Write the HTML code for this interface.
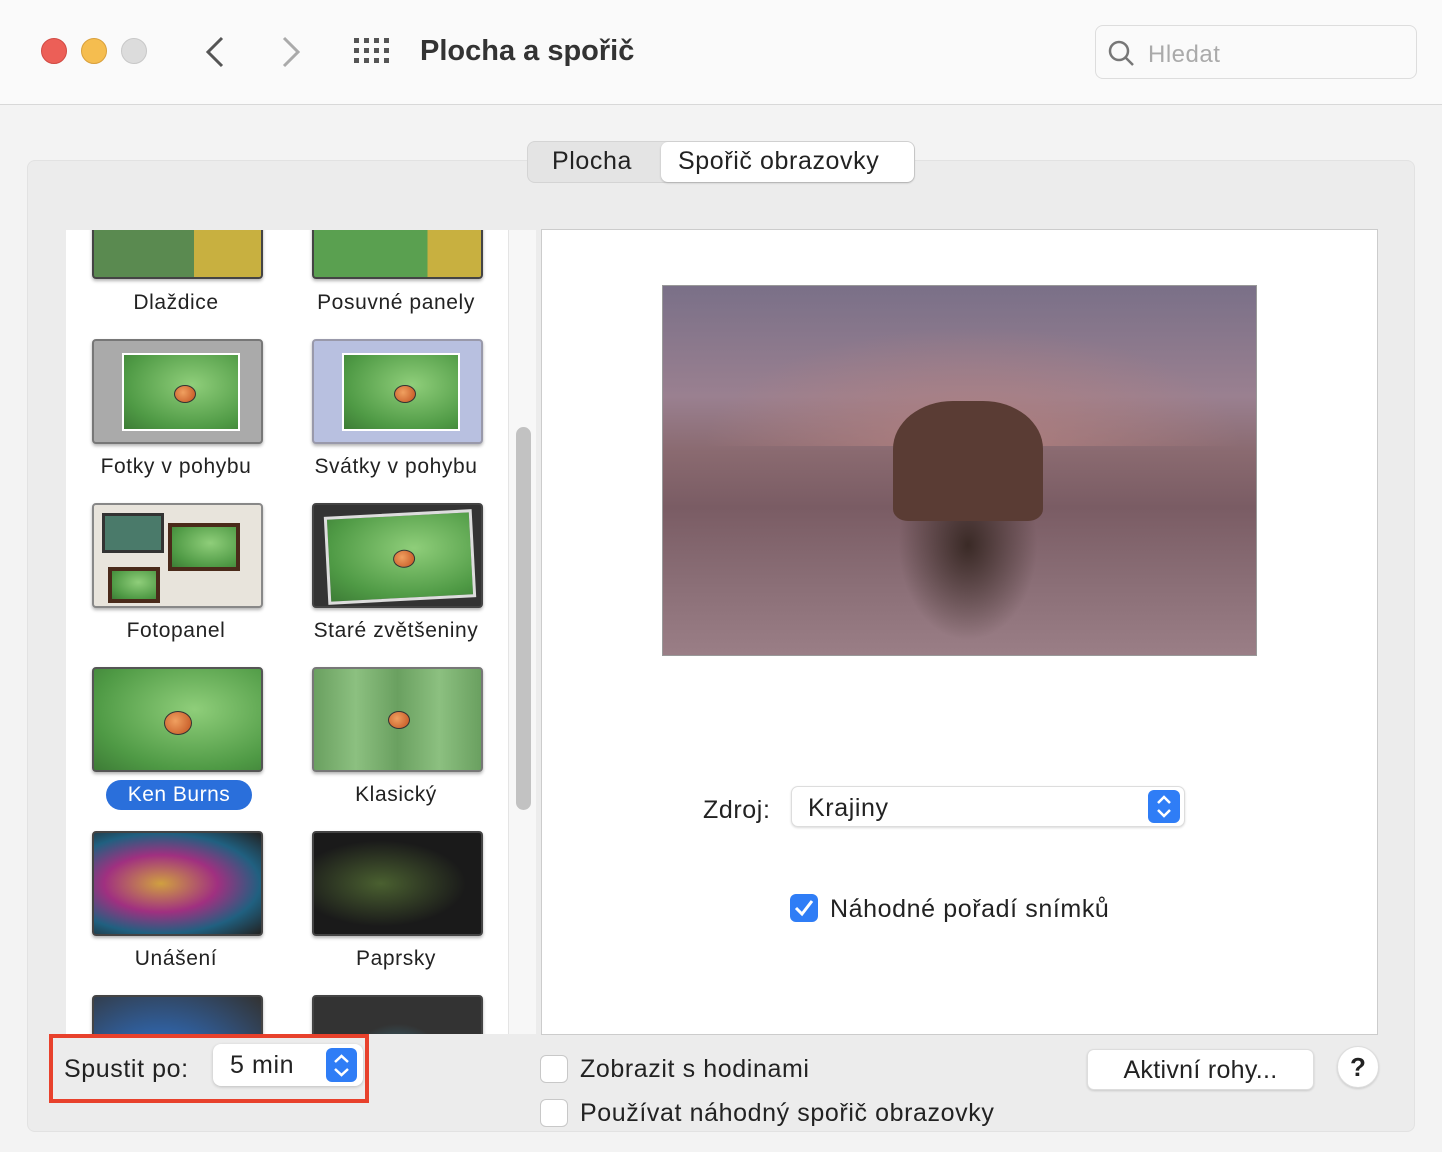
<!DOCTYPE html>
<html><head><meta charset="utf-8"><style>
*{margin:0;padding:0;box-sizing:border-box}
body{width:1442px;height:1152px;background:#f3f3f3;font-family:"Liberation Sans",sans-serif;color:#222;position:relative;overflow:hidden}
.abs{position:absolute}
.tb{left:0;top:0;width:1442px;height:105px;background:#fafafa;border-bottom:1px solid #d8d8d8}
.dot{width:26px;height:26px;border-radius:50%;top:38px}
.panel{left:27px;top:160px;width:1388px;height:972px;background:#ececec;border:1px solid #e2e2e2;border-radius:8px}
.list{left:66px;top:230px;width:442px;height:804px;background:#fff;overflow:hidden}
.th{position:absolute;width:171px;height:105px;border:2px solid #444;border-radius:4px;box-shadow:0 2px 3px rgba(0,0,0,.3)}
.lb{position:absolute;width:220px;text-align:center;font-size:21px;color:#222;letter-spacing:.6px}
.green{background:radial-gradient(ellipse at 60% 40%,#8fce7a,#4f9a45 70%,#3d7c36)}
.bug{position:absolute;width:22px;height:18px;border-radius:50%;background:radial-gradient(circle at 40% 40%,#f0a060,#c0501e);border:1px solid #333}
.cb{width:28px;height:28px;border:1px solid #c8c8c8;border-radius:6px;background:#fff}
.t25{font-size:25px;letter-spacing:.6px}
</style></head><body>
<div class="abs tb"></div>
<div class="abs dot" style="left:41px;background:#ec5f57;border:1px solid #d14a43"></div>
<div class="abs dot" style="left:81px;background:#f5bd4f;border:1px solid #d9a03b"></div>
<div class="abs dot" style="left:121px;background:#dcdcdc;border:1px solid #c8c8c8"></div>
<svg class="abs" style="left:200px;top:34px" width="110" height="36"><path d="M22 4 L8 18 L22 32" stroke="#555" stroke-width="3" fill="none"/><path d="M84 4 L98 18 L84 32" stroke="#aaa" stroke-width="3" fill="none"/></svg>
<svg class="abs" style="left:354px;top:38px" width="38" height="28" fill="#555"><g id="r"><rect x="0" y="0" width="5" height="5"/><rect x="10" y="0" width="5" height="5"/><rect x="20" y="0" width="5" height="5"/><rect x="30" y="0" width="5" height="5"/></g><use href="#r" y="10"/><use href="#r" y="20"/></svg>
<div class="abs" style="left:420px;top:35px;font-size:29px;font-weight:bold;color:#333">Plocha a spořič</div>
<div class="abs" style="left:1095px;top:25px;width:322px;height:54px;border:1px solid #ddd;border-radius:8px;background:#fafafa"></div>
<svg class="abs" style="left:1106px;top:38px" width="30" height="30"><circle cx="13" cy="13" r="9" stroke="#777" stroke-width="2.5" fill="none"/><path d="M20 20 L27 27" stroke="#777" stroke-width="2.5"/></svg>
<div class="abs" style="left:1148px;top:41px;font-size:24px;color:#aaa;letter-spacing:.5px">Hledat</div>
<div class="abs panel"></div>
<div class="abs" style="left:527px;top:141px;width:388px;height:42px;background:#e4e4e4;border:1px solid #d4d4d4;border-radius:8px"></div>
<div class="abs" style="left:661px;top:142px;width:253px;height:40px;background:#fff;border-radius:7px;box-shadow:0 1px 2px rgba(0,0,0,.2)"></div>
<div class="abs t25" style="left:552px;top:147px">Plocha</div>
<div class="abs t25" style="left:678px;top:147px">Spořič obrazovky</div>
<div class="abs list">
 <div class="th green" style="left:26px;top:-56px;background:linear-gradient(90deg,#5a8a50 60%,#c8b040 60%)"></div>
 <div class="th green" style="left:246px;top:-56px;background:linear-gradient(90deg,#5aa050 68%,#c8b040 68%)"></div>
 <div class="lb" style="left:0;top:61px">Dlaždice</div><div class="lb" style="left:220px;top:61px">Posuvné panely</div>
 <div class="th" style="left:26px;top:109px;background:#aaa;border-color:#777"><div class="abs green" style="left:28px;top:12px;width:118px;height:78px;border:2px solid #fff"><div class="bug" style="left:50px;top:30px"></div></div></div>
 <div class="th" style="left:246px;top:109px;background:#b8c0e0;border-color:#99a"><div class="abs green" style="left:28px;top:12px;width:118px;height:78px;border:2px solid #fff"><div class="bug" style="left:50px;top:30px"></div></div></div>
 <div class="lb" style="left:0;top:225px">Fotky v pohybu</div><div class="lb" style="left:220px;top:225px">Svátky v pohybu</div>
 <div class="th" style="left:26px;top:273px;background:#e8e4dc;border-color:#888"><div class="abs" style="left:8px;top:8px;width:62px;height:40px;background:#4a7a6a;border:3px solid #333"></div><div class="abs green" style="left:74px;top:18px;width:72px;height:48px;border:4px solid #4a2a1a"></div><div class="abs green" style="left:14px;top:62px;width:52px;height:36px;border:4px solid #4a2a1a"></div></div>
 <div class="th" style="left:246px;top:273px;background:#333"><div class="abs green" style="left:12px;top:8px;width:148px;height:88px;border:3px solid #ddd;transform:rotate(-3deg)"><div class="bug" style="left:64px;top:34px"></div></div></div>
 <div class="lb" style="left:0;top:389px">Fotopanel</div><div class="lb" style="left:220px;top:389px">Staré zvětšeniny</div>
 <div class="th green" style="left:26px;top:437px;border-color:#555"><div class="bug" style="left:70px;top:42px;width:28px;height:24px"></div></div>
 <div class="th" style="left:246px;top:437px;background:linear-gradient(90deg,#6aa060,#8cc080,#6aa060,#8cc080,#6aa060);border-color:#777"><div class="bug" style="left:74px;top:42px"></div></div>
 <div class="abs" style="left:40px;top:550px;width:146px;height:30px;background:#2a6fdb;border-radius:15px;color:#fff;font-size:21px;text-align:center;line-height:30px;letter-spacing:.5px">Ken Burns</div>
 <div class="lb" style="left:220px;top:553px">Klasický</div>
 <div class="th" style="left:26px;top:601px;background:radial-gradient(ellipse at 40% 50%,#d0a040,#a03080 40%,#206080 70%,#222)"></div>
 <div class="th" style="left:246px;top:601px;background:radial-gradient(ellipse at 40% 50%,#4a6030,#1a1a1a 60%)"></div>
 <div class="lb" style="left:0;top:717px">Unášení</div><div class="lb" style="left:220px;top:717px">Paprsky</div>
 <div class="th" style="left:26px;top:765px;background:radial-gradient(ellipse at 40% 80%,#60a060,#3060a0 40%,#333)"></div>
 <div class="th" style="left:246px;top:765px;background:radial-gradient(ellipse at 50% 90%,#40a0c0,#333 50%)"></div>
</div>
<div class="abs" style="left:508px;top:230px;width:28px;height:804px;background:#f7f7f7;border-left:1px solid #e4e4e4"></div>
<div class="abs" style="left:516px;top:427px;width:15px;height:383px;background:#c2c2c2;border-radius:8px"></div>
<div class="abs" style="left:541px;top:229px;width:837px;height:806px;background:#fff;border:1px solid #ccc"></div>
<div class="abs" style="left:662px;top:285px;width:595px;height:371px;border:1px solid #999;background:linear-gradient(180deg,#7a7088 0%,#9a8090 30%,#8a6a70 45%,#7a5c64 60%,#8a6e76 80%,#9a7e86 100%);overflow:hidden">
 <div class="abs" style="left:40px;top:40px;width:540px;height:120px;background:radial-gradient(ellipse at 50% 100%,#b08080,transparent 70%)"></div>
 <div class="abs" style="left:230px;top:115px;width:150px;height:120px;background:#5a3c34;border-radius:40% 40% 10% 10%"></div>
 <div class="abs" style="left:235px;top:235px;width:140px;height:120px;background:radial-gradient(ellipse at 50% 20%,#3a2a26,transparent 70%)"></div>
</div>
<div class="abs t25" style="left:703px;top:796px">Zdroj:</div>
<div class="abs" style="left:791px;top:786px;width:394px;height:41px;background:#fff;border:1px solid #ddd;border-radius:7px;box-shadow:0 1px 2px rgba(0,0,0,.15)"></div>
<div class="abs t25" style="left:808px;top:794px">Krajiny</div>
<div class="abs" style="left:1148px;top:790px;width:32px;height:33px;background:#2f7df6;border-radius:6px"></div>
<svg class="abs" style="left:1148px;top:790px" width="32" height="33"><path d="M10 13 L16 7 L22 13 M10 20 L16 26 L22 20" stroke="#fff" stroke-width="2.5" fill="none"/></svg>
<div class="abs" style="left:790px;top:894px;width:28px;height:28px;background:#2f7df6;border-radius:6px"></div>
<svg class="abs" style="left:790px;top:894px" width="28" height="28"><path d="M6 14 L12 20 L22 7" stroke="#fff" stroke-width="3" fill="none"/></svg>
<div class="abs t25" style="left:830px;top:895px">Náhodné pořadí snímků</div>
<div class="abs" style="left:49px;top:1034px;width:320px;height:69px;border:4px solid #e8412c"></div>
<div class="abs t25" style="left:64px;top:1055px">Spustit po:</div>
<div class="abs" style="left:213px;top:1044px;width:150px;height:42px;background:#fff;border-radius:8px;box-shadow:0 1px 3px rgba(0,0,0,.2)"></div>
<div class="abs t25" style="left:230px;top:1051px">5 min</div>
<div class="abs" style="left:326px;top:1048px;width:31px;height:34px;background:#2f7df6;border-radius:6px"></div>
<svg class="abs" style="left:326px;top:1048px" width="31" height="34"><path d="M9 14 L15.5 8 L22 14 M9 21 L15.5 27 L22 21" stroke="#fff" stroke-width="2.5" fill="none"/></svg>
<div class="abs cb" style="left:540px;top:1055px"></div>
<div class="abs t25" style="left:580px;top:1055px">Zobrazit s hodinami</div>
<div class="abs cb" style="left:540px;top:1099px"></div>
<div class="abs t25" style="left:580px;top:1099px">Používat náhodný spořič obrazovky</div>
<div class="abs t25" style="left:1087px;top:1049px;width:227px;height:41px;background:#fff;border:1px solid #ddd;border-radius:7px;box-shadow:0 1px 2px rgba(0,0,0,.15);text-align:center;line-height:40px;letter-spacing:.3px">Aktivní rohy...</div>
<div class="abs" style="left:1337px;top:1046px;width:42px;height:42px;background:#fff;border:1px solid #ddd;border-radius:50%;box-shadow:0 1px 2px rgba(0,0,0,.15);text-align:center;font-size:26px;font-weight:bold;line-height:40px">?</div>
</body></html>
